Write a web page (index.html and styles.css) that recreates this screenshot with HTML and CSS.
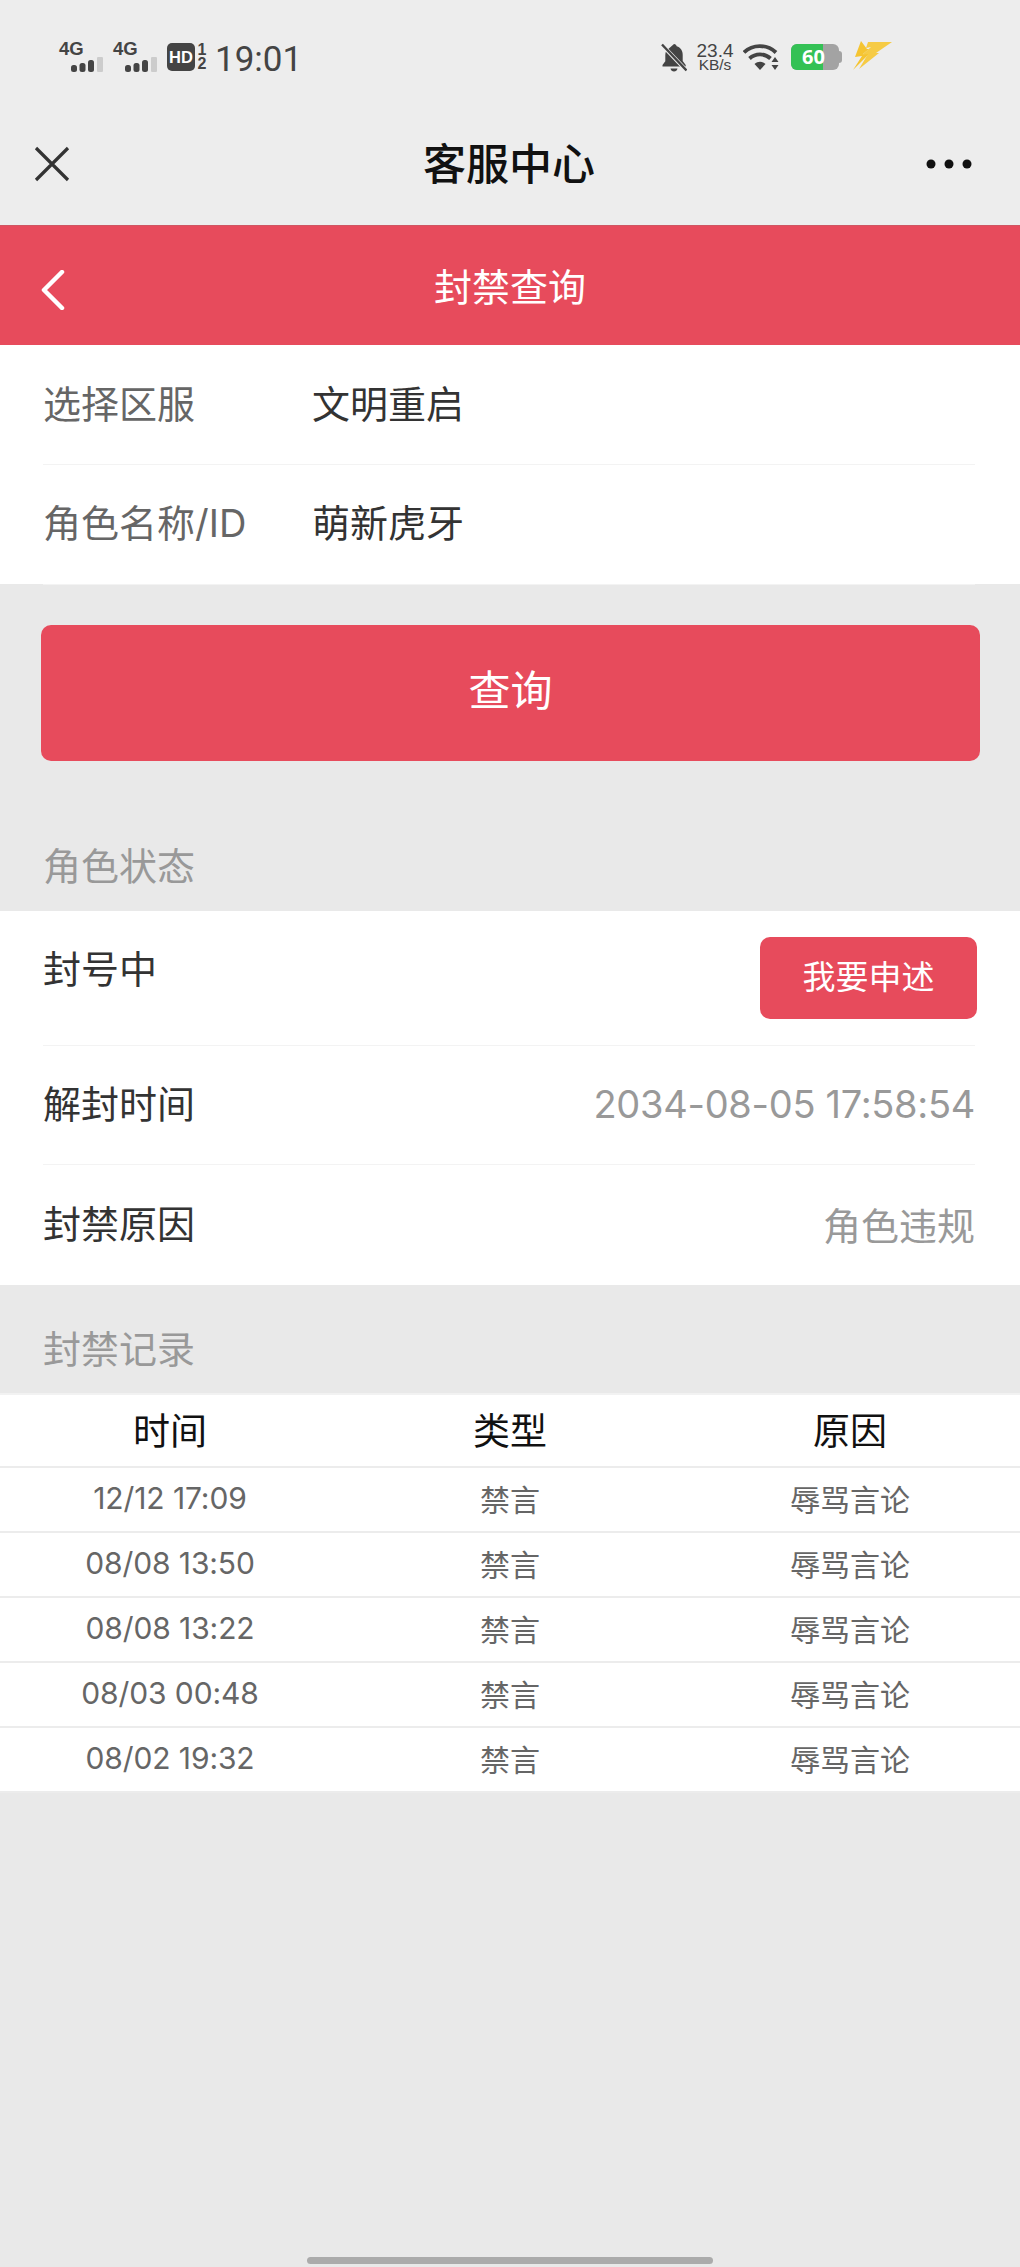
FILE: index.html
```html
<!DOCTYPE html>
<html lang="zh-CN">
<head>
  <meta charset="UTF-8">
  <meta name="viewport" content="width=device-width, initial-scale=1.0">
  <title>客服中心</title>
  <link rel="stylesheet" href="styles.css">
</head>
<body>
  <div class="topArea">
    <div class="statusBar">
      <div class="statusLeft">
        <div class="net">
          <span class="netText">4G</span>
          <svg class="netBars" width="33" height="15" viewBox="0 0 33 15">
            <rect x="0" y="8" width="6" height="7" rx="2.500" fill="#444"/>
            <rect x="8.500" y="6" width="6" height="9" rx="2.500" fill="#444"/>
            <rect x="17" y="3" width="6" height="12" rx="2.500" fill="#444"/>
            <rect x="26" y="0" width="6" height="15" rx="1" fill="#ccc"/>
          </svg>
        </div>
        <div class="net">
          <span class="netText">4G</span>
          <svg class="netBars" width="33" height="15" viewBox="0 0 33 15">
            <rect x="0" y="8" width="6" height="7" rx="2.500" fill="#444"/>
            <rect x="8.500" y="6" width="6" height="9" rx="2.500" fill="#444"/>
            <rect x="17" y="3" width="6" height="12" rx="2.500" fill="#444"/>
            <rect x="26" y="0" width="6" height="15" rx="1" fill="#ccc"/>
          </svg>
        </div>
        <span class="hdBadge">HD</span>
        <span class="hdNum"><span>1</span><span>2</span></span>
        <span class="clock">19:01</span>
      </div>
      <div class="statusRight">
        <svg width="26" height="29" viewBox="0 0 26 29">
          <path d="M13 1c1.500 0 2.500 1 2.700 2.300c4 1.200 6 4.500 6 8.700v6l3 4v1.500H1.500V22l2.800-3.800V12c0-1.500.3-3 1-4.300z" fill="#444"/>
          <path d="M9.500 25.500h7c-.4 2-1.700 3-3.500 3s-3.100-1-3.500-3z" fill="#444"/>
          <path d="M1 2l24 25" stroke="#ededed" stroke-width="4"/>
          <path d="M1 1.500l24.500 26" stroke="#444" stroke-width="2.400"/>
        </svg>
        <div class="speed">
          <span class="speedNum">23.4</span>
          <span class="speedUnit">KB/s</span>
        </div>
        <svg width="37" height="28" viewBox="0 0 37 28">
          <path d="M1 9.500C9.500 1 24 1 33 9.500" fill="none" stroke="#444" stroke-width="3.800"/>
          <path d="M6.500 15.500C12.500 10 21.500 10 27.500 15.500" fill="none" stroke="#444" stroke-width="3.800"/>
          <path d="M11.500 21C15 18 19 18 22.500 21L17 27z" fill="#444"/>
          <path d="M32 14l3.500 5h-7zM28.500 22h7L32 27z" fill="#444"/>
        </svg>
        <div class="battery">
          <div class="batteryBody">
            <span class="batteryLevel"></span>
            <span class="batteryText">60</span>
          </div>
          <span class="batteryNub"></span>
        </div>
        <svg width="40" height="32" viewBox="0 0 40 32">
          <path d="M9 2L3 18l7-1L1 31l17-17-7 1 6-5-2 0z" fill="#f5c431"/>
          <path d="M16 3h24L24 14l3 0L7 30l9-15-6 1 9-8-5 1z" fill="#f6cb45"/>
        </svg>
      </div>
    </div>
    <div class="navBar">
      <svg class="navClose" width="36" height="36" viewBox="0 0 36 36">
        <path d="M2 2l32 32M34 2L2 34" stroke="#333" stroke-width="3.200" fill="none"/>
      </svg>
      <span class="navTitle">客服中心</span>
      <svg class="navMore" width="46" height="10" viewBox="0 0 46 10">
        <circle cx="5" cy="5" r="4.500" fill="#111"/>
        <circle cx="23" cy="5" r="4.500" fill="#111"/>
        <circle cx="41" cy="5" r="4.500" fill="#111"/>
      </svg>
    </div>
  </div>

  <div class="pageHead">
    <svg class="backIcon" width="24" height="40" viewBox="0 0 24 40">
      <path d="M21 2L3 20l18 18" stroke="#fff" stroke-width="4.500" fill="none" stroke-linecap="round" stroke-linejoin="round"/>
    </svg>
    <span class="pageTitle">封禁查询</span>
  </div>

  <div class="formCard">
    <div class="formRow">
      <span class="formLabel">选择区服</span>
      <span class="formValue">文明重启</span>
    </div>
    <div class="formRow formRowLast">
      <span class="formLabel">角色名称/ID</span>
      <span class="formValue">萌新虎牙</span>
    </div>
  </div>

  <div class="queryBtn">查询</div>

  <div class="sectionLabel statusSection">角色状态</div>
  <div class="infoCard">
    <div class="infoRow infoTop">
      <span class="infoLabel">封号中</span>
      <span class="appealBtn">我要申述</span>
    </div>
    <div class="infoRow">
      <span class="infoLabel">解封时间</span>
      <span class="infoValue dateValue">2034-08-05 17:58:54</span>
    </div>
    <div class="infoRow">
      <span class="infoLabel">封禁原因</span>
      <span class="infoValue">角色违规</span>
    </div>
  </div>

  <div class="sectionLabel recordSection">封禁记录</div>
  <table class="recordTable">
    <tr><th>时间</th><th>类型</th><th>原因</th></tr>
    <tr><td>12/12 17:09</td><td>禁言</td><td>辱骂言论</td></tr>
    <tr><td>08/08 13:50</td><td>禁言</td><td>辱骂言论</td></tr>
    <tr><td>08/08 13:22</td><td>禁言</td><td>辱骂言论</td></tr>
    <tr><td>08/03 00:48</td><td>禁言</td><td>辱骂言论</td></tr>
    <tr><td>08/02 19:32</td><td>禁言</td><td>辱骂言论</td></tr>
  </table>

  <div class="homeBar"></div>
</body>
</html>
```

FILE: styles.css
```css
body {
  font-family: Inter, "Noto Sans CJK SC", sans-serif;
  margin: 0;
  padding: 0;
  width: 1020px;
  height: 2267px;
  background-color: #e9e9e9;
  display: flex;
  flex-direction: column;
  overflow: hidden;
}

.topArea {
  height: 225px;
  background-color: #ededed;
}

.statusBar {
  height: 118px;
  padding: 40px 128px 0 59px;
  box-sizing: border-box;
  display: flex;
  justify-content: space-between;
  align-items: flex-start;
}

.statusLeft {
  display: flex;
  align-items: center;
  height: 34px;
  color: #444;
}

.net {
  width: 54px;
  height: 30px;
  position: relative;
}

.netText {
  font-family: "Liberation Sans", sans-serif;
  font-weight: bold;
  font-size: 18.500px;
  line-height: 14px;
  display: block;
}

.netBars {
  position: absolute;
  left: 12px;
  top: 15px;
}

.hdBadge {
  width: 28px;
  height: 28px;
  background-color: #444;
  color: #fff;
  border-radius: 5px;
  font-family: "Liberation Sans", sans-serif;
  font-weight: bold;
  font-size: 16.500px;
  line-height: 28px;
  text-align: center;
}

.hdNum {
  width: 12px;
  margin-left: 1px;
  display: flex;
  flex-direction: column;
  font-family: "Liberation Sans", sans-serif;
  font-weight: bold;
  font-size: 16px;
  line-height: 14px;
  text-align: center;
}

.clock {
  font-family: Roboto, sans-serif;
  font-size: 35px;
  line-height: 34px;
  margin: 5px 0 0 7px;
}

.statusRight {
  display: flex;
  align-items: center;
  height: 34px;
  color: #444;
}

.speed {
  width: 38px;
  margin-left: 9px;
  display: flex;
  flex-direction: column;
  align-items: center;
  font-family: "Liberation Sans", sans-serif;
}

.speedNum {
  font-size: 19px;
  line-height: 15px;
}

.speedUnit {
  font-size: 15.500px;
  line-height: 14px;
}

.speed + svg {
  margin-left: 9px;
}

.battery {
  display: flex;
  align-items: center;
  margin-left: 11px;
}

.batteryBody {
  width: 48px;
  height: 26px;
  border-radius: 6px;
  background-color: #a3a3a3;
  overflow: hidden;
  position: relative;
}

.batteryLevel {
  display: block;
  width: 32px;
  height: 26px;
  background-color: #34c155;
}

.batteryText {
  position: absolute;
  left: 11px;
  top: 0;
  color: #fff;
  font-family: "Open Sans", sans-serif;
  font-weight: bold;
  font-size: 20px;
  line-height: 26px;
}

.batteryNub {
  width: 3px;
  height: 12px;
  background-color: #a3a3a3;
  border-radius: 0 3px 3px 0;
}

.battery + svg {
  margin-left: 10px;
  margin-top: -4px;
}

.navBar {
  height: 107px;
  padding: 0 48px 16px 34px;
  box-sizing: border-box;
  display: flex;
  align-items: center;
}

.navTitle {
  flex: 1;
  margin-left: 22px;
  font-size: 43px;
  font-weight: 500;
  color: #111;
  line-height: 60px;
  text-align: center;
}

.pageHead {
  height: 120px;
  box-sizing: border-box;
  border-top: 1px solid #cf5662;
  background-color: #e74b5c;
  display: flex;
  justify-content: center;
  align-items: center;
  position: relative;
}

.backIcon {
  position: absolute;
  left: 41px;
  top: 44px;
}

.pageTitle {
  font-size: 38px;
  color: #fff;
  line-height: 50px;
  padding-top: 2px;
}

.formCard {
  background-color: #fff;
  height: 239px;
}

.formRow {
  height: 112px;
  padding-bottom: 7px;
  margin-left: 43px;
  width: 932px;
  border-bottom: 1px solid #f3f3f3;
  display: flex;
  align-items: center;
  font-size: 38px;
}

.formRowLast {
  height: 110px;
  padding-bottom: 9px;
}

.formLabel {
  width: 269px;
  color: #666;
}

.formValue {
  color: #333;
}

.queryBtn {
  margin: 41px 40px 0 41px;
  height: 136px;
  border-radius: 10px;
  background-color: #e74b5c;
  color: #fff;
  font-size: 42px;
  line-height: 132px;
  text-align: center;
}

.sectionLabel {
  padding-left: 43px;
  box-sizing: border-box;
  display: flex;
  align-items: flex-end;
  font-size: 38px;
  line-height: 44px;
  color: #999;
}

.statusSection {
  height: 150px;
  padding-bottom: 23px;
}

.recordSection {
  height: 108px;
  padding-bottom: 22px;
}

.infoCard {
  background-color: #fff;
  height: 374px;
}

.infoRow {
  height: 117px;
  padding-bottom: 2px;
  margin-left: 43px;
  width: 932px;
  border-bottom: 1px solid #f3f3f3;
  display: flex;
  justify-content: space-between;
  align-items: center;
  font-size: 38px;
}

.infoRow:last-child {
  border-bottom: none;
}

.infoTop {
  height: 135px;
  padding: 26px 0 0;
  box-sizing: border-box;
  align-items: flex-start;
}

.infoTop + .infoRow {
  height: 116px;
}

.infoLabel {
  color: #333;
  line-height: 64px;
}

.infoValue {
  color: #999;
}

.dateValue {
  letter-spacing: -0.3px;
}

.appealBtn {
  width: 217px;
  height: 82px;
  margin-right: -2px;
  border-radius: 10px;
  background-color: #e74b5c;
  color: #fff;
  font-size: 33px;
  line-height: 80px;
  text-align: center;
}

.recordTable {
  width: 100%;
  table-layout: fixed;
  border-collapse: collapse;
  background-color: #fff;
  border-top: 2px solid #f2f2f2;
  text-align: center;
}

.recordTable th {
  height: 67px;
  font-size: 37px;
  font-weight: 400;
  color: #111;
  padding: 0 0 4px;
  border-bottom: 2px solid #ececec;
}

.recordTable td {
  height: 60px;
  font-size: 30px;
  letter-spacing: -0.1px;
  color: #666;
  padding: 0 0 3px;
  border-bottom: 2px solid #ececec;
}

.homeBar {
  margin: auto 307px 3px;
  height: 7px;
  border-radius: 4px;
  background-color: #ababab;
}
```
